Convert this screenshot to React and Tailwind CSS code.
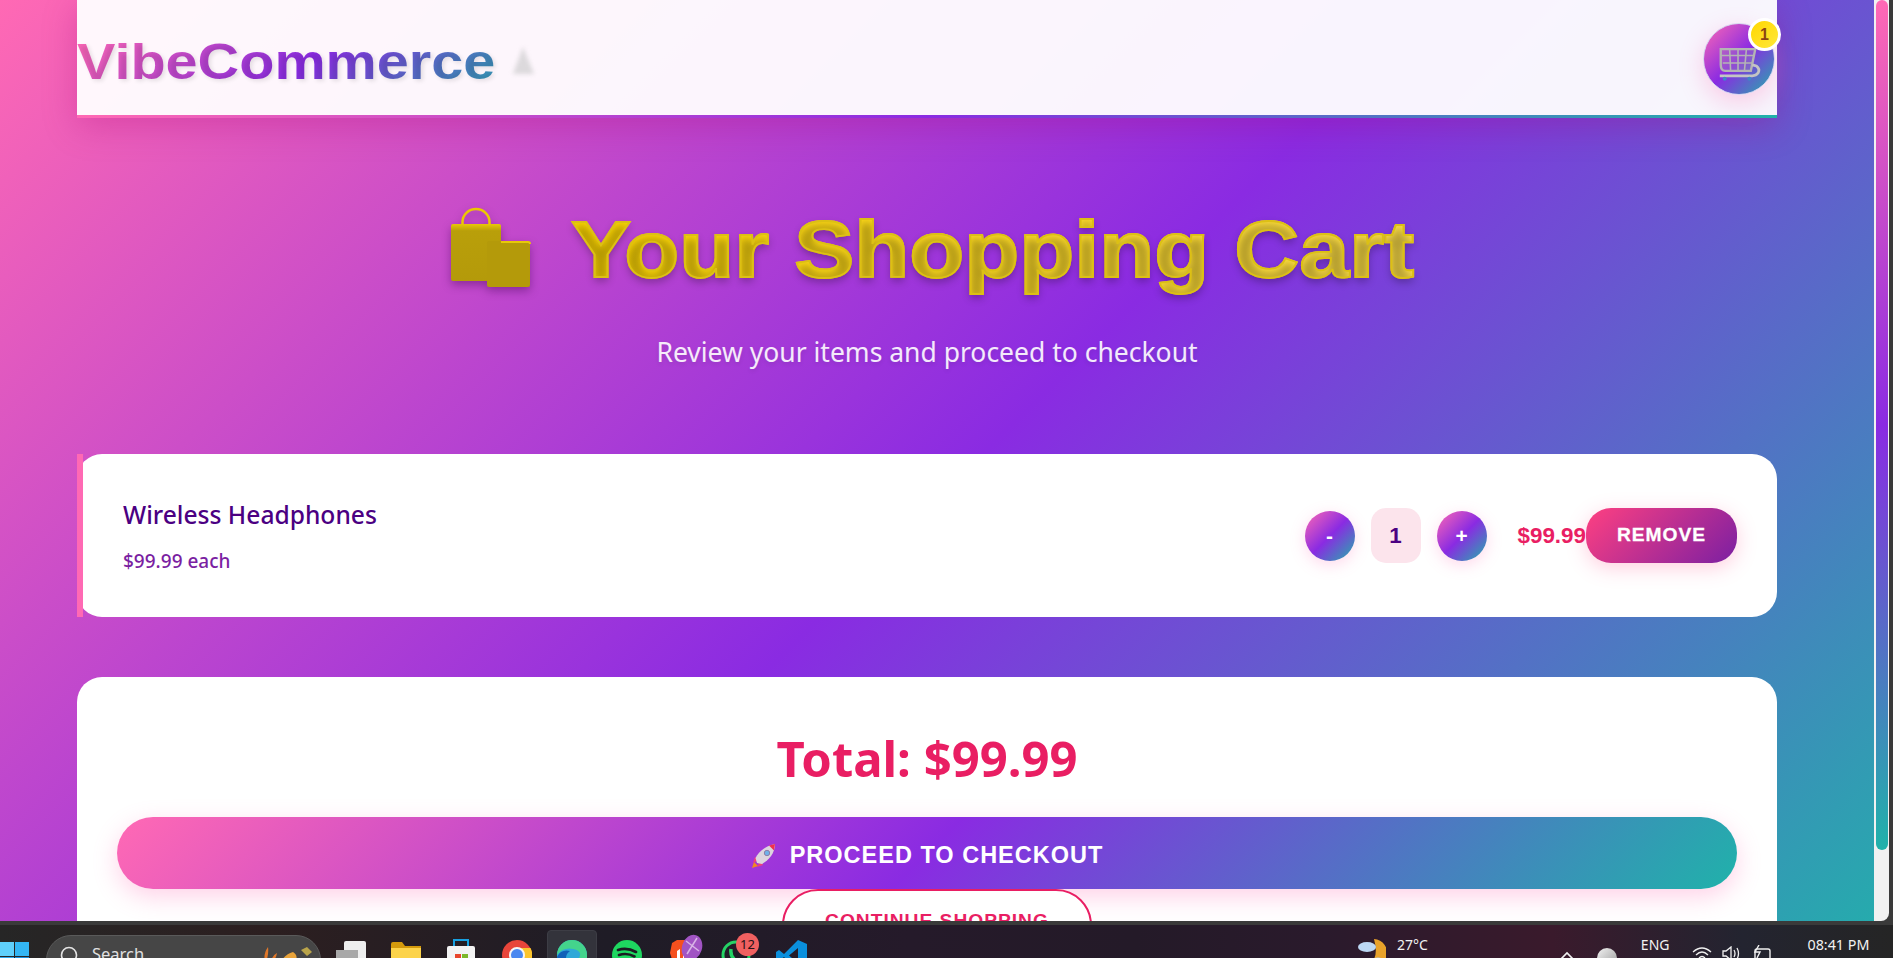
import React from 'react';

const sans = "font-['Noto_Sans',sans-serif]";
const arial = "font-['Liberation_Sans',Arial,sans-serif]";

const BagEmoji = () => (
  <svg width="82" height="82" viewBox="0 0 82 82" className="mb-[6px] shrink-0 drop-shadow-[0_4px_5px_rgba(60,0,80,0.4)]">
    <defs>
      <linearGradient id="bagEdge" x1="0" y1="0" x2="0" y2="1">
        <stop offset="0" stopColor="#e8c808" />
        <stop offset="0.12" stopColor="#b99f0a" />
        <stop offset="1" stopColor="#b49a0a" />
      </linearGradient>
    </defs>
    <path d="M12.5 21 v-5 a13.5 13 0 0 1 27 0 v5" fill="none" stroke="#ecc900" strokeWidth="2.5" />
    <rect x="1" y="18" width="50" height="57" rx="2" fill="url(#bagEdge)" />
    <rect x="37" y="35" width="43" height="46" rx="2" fill="#b49a0a" />
    <path d="M51 36 H78 Q80 36 80 38" fill="none" stroke="#e8c808" strokeWidth="2" />
  </svg>
);

const CartIcon = () => (
  <svg width="71" height="71" viewBox="0 0 71 71" fill="none" stroke="#b4b4b4" strokeWidth="1.6">
    <path d="M17 25 H52 L47.5 47 H21.5 Q17 47 17 41 Z" strokeWidth="2.4" fill="rgba(170,170,170,0.25)" />
    <path d="M18 31.5 H50.5 M19 39 H49 M26 25 L27 47 M34.5 25 V47 M43 25 L41 47" />
    <path d="M49 41 L53 42 Q57 45 55 49 Q53 52 49 52 H16" strokeWidth="2.8" stroke="#c4c4c4" />
    <circle cx="21" cy="55" r="2" fill="#3f86c6" stroke="none" />
    <circle cx="46" cy="55" r="2" fill="#3f86c6" stroke="none" />
  </svg>
);

const Rocket = () => (
  <svg width="26" height="26" viewBox="0 0 26 26" className="shrink-0">
    <path d="M3 19 L1 25 L7 23 Z" fill="#f28a1e" />
    <path d="M4 14 L2 20 L8 17 Z M12 22 L6 24 L9 18 Z" fill="#f0407a" />
    <path d="M6 20 L4.5 15 C8 8 15 3 24 1 C24 10 18 17 11 21 Z" fill="#ddd5de" />
    <path d="M18 2.5 L24 1 L23 7.5 Z" fill="#f0304f" />
    <circle cx="16" cy="10" r="2.7" fill="#6fb1e8" stroke="#8d7ea8" strokeWidth="1" />
  </svg>
);

const RoundBtn = ({ label }) => (
  <button className={`flex h-[50px] w-[50px] shrink-0 items-center justify-center rounded-full bg-[linear-gradient(135deg,#ff69b4_0%,#8a2be2_50%,#20b2aa_100%)] text-[20.8px] font-bold text-white shadow-[0_4px_15px_rgba(255,105,180,0.25)] ${arial}`}>
    {label}
  </button>
);

const Windows = () => (
  <svg width="29" height="29" viewBox="0 0 29 29">
    <rect x="0" y="0" width="14" height="14" fill="#5fd0fb" />
    <rect x="15" y="0" width="14" height="14" fill="#33b6f4" />
    <rect x="0" y="15" width="14" height="14" fill="#2ea7ee" />
    <rect x="15" y="15" width="14" height="14" fill="#1890e0" />
  </svg>
);

const TaskIcon = ({ className, children }) => <div className={`shrink-0 ${className}`}>{children}</div>;

const Taskbar = () => (
  <div className="flex h-[37px] shrink-0 items-start overflow-hidden border-t-4 border-[#3a3a3a] bg-[linear-gradient(90deg,#262626_0%,#2c1f20_14%,#1f1c26_32%,#251a2a_48%,#241a28_60%,#2a1a2c_70%,#3a1a2c_82%,#232430_92%,#252525_100%)]">
    <TaskIcon className="mt-[17px]"><Windows /></TaskIcon>
    <div className="relative ml-[17px] mt-[10px] flex h-[50px] w-[275px] shrink-0 rounded-[25px] border border-[#5a5a5a] bg-[#464646]">
      <svg width="19" height="21" viewBox="0 0 19 21" className="ml-[13px] mt-[10px]" fill="none" stroke="#e4e4e4" strokeWidth="1.6">
        <circle cx="9" cy="9" r="7.5" />
      </svg>
      <span className={`ml-[13px] mt-[6px] text-[16.5px] leading-[24px] text-[#e0e0e0] ${sans}`}>Search</span>
      <svg width="54" height="20" viewBox="0 0 54 20" className="absolute left-[214px] top-[8px]">
        <path d="M4 18 Q2 10 7 3 Q8 10 5 18 M10 20 Q10 12 16 9 Q15 15 10 20" fill="#e0782a" />
        <path d="M20 18 Q24 10 32 8 Q38 12 34 18 Q26 22 20 18" fill="#e8a33a" />
        <path d="M40 6 L46 3 L51 8 L46 12 Z" fill="#b9a44a" />
      </svg>
    </div>
    <TaskIcon className="ml-[15px] mt-[16px]">
      <svg width="30" height="30" viewBox="0 0 30 30"><rect x="8" y="0" width="22" height="30" rx="2" fill="#eeeeee" /><rect x="0" y="9" width="22" height="21" fill="#a8a8a8" /></svg>
    </TaskIcon>
    <TaskIcon className="ml-[25px] mt-[17px]">
      <svg width="30" height="30" viewBox="0 0 30 30"><path d="M0 2 Q0 0 2 0 H11 L14 4 H30 V30 H0 Z" fill="#d49a0c" /><rect x="0" y="6" width="30" height="24" fill="#fcd34a" /></svg>
    </TaskIcon>
    <TaskIcon className="ml-[25px] mt-[14px]">
      <svg width="30" height="32" viewBox="0 0 30 32"><path d="M8 8 V1 H22 V8" fill="none" stroke="#18a0e0" strokeWidth="2" /><rect x="1" y="7" width="28" height="25" rx="2" fill="#f3f3f3" /><rect x="9" y="15" width="6" height="6" fill="#e8452c" /><rect x="16" y="15" width="6" height="6" fill="#7cb82a" /><rect x="9" y="22" width="6" height="6" fill="#2aa0e8" /><rect x="16" y="22" width="6" height="6" fill="#f6b91c" /></svg>
    </TaskIcon>
    <TaskIcon className="ml-[26px] mt-[15px]">
      <svg width="30" height="30" viewBox="0 0 30 30">
        <circle cx="15" cy="15" r="15" fill="#e8453a" />
        <path d="M2 22 A15 15 0 0 0 15 30 L21 19 L8 19 Z" fill="#3aa757" />
        <path d="M15 8 H28.5 A15 15 0 0 1 15 30 L21 19 Z" fill="#fbc52c" />
        <circle cx="15" cy="15" r="7" fill="#4a88f0" stroke="#f5f5f5" strokeWidth="2" />
      </svg>
    </TaskIcon>
    <div className="ml-[15px] mt-[5px] flex h-[50px] w-[50px] shrink-0 justify-center rounded-[4px] border border-[#3d3d45] bg-[#33333b] pt-[9px]">
      <svg width="30" height="30" viewBox="0 0 30 30">
        <circle cx="15" cy="15" r="15" fill="#2ea8d8" />
        <path d="M30 15 A15 15 0 0 0 0 15 Q6 7 16 9 Q26 11 22 18 H30 Z" fill="#44d48c" />
        <path d="M0 17 Q4 9 13 11 Q7 15 10 23 Q13 28 19 29 Q3 32 0 17 Z" fill="#1060b8" />
      </svg>
    </div>
    <TaskIcon className="ml-[15px] mt-[15px]">
      <svg width="30" height="30" viewBox="0 0 30 30">
        <circle cx="15" cy="15" r="15" fill="#1ed760" />
        <path d="M6 10 Q15 7 24 12 M7 15 Q15 12.5 22.5 16.5 M8 20 Q15 18 21 21" fill="none" stroke="#1b1b22" strokeWidth="2.6" strokeLinecap="round" />
      </svg>
    </TaskIcon>
    <TaskIcon className="relative ml-[27px] mt-[15px] h-[30px] w-[34px]">
      <svg width="24" height="30" viewBox="0 0 24 30"><path d="M3 3 L8 0 H17 L22 3 L23 13 L19 26 L12 30 L5 26 L1 13 Z" fill="#f5501e" /><path d="M8 11 L11 9 V20 H8 Z M14 11 L17 13 L14 20 Z" fill="#ffffff" /></svg>
      <svg width="22" height="27" viewBox="0 0 22 27" className="absolute left-[12px] top-[-6px]">
        <ellipse cx="11" cy="13.5" rx="10" ry="13" transform="rotate(18 11 13.5)" fill="#a154c4" />
        <path d="M5 7 L18 17 M16 4 L6 20" stroke="#d8b4e6" strokeWidth="1.5" />
      </svg>
    </TaskIcon>
    <TaskIcon className="relative ml-[18px] mt-[15px] h-[30px] w-[30px]">
      <svg width="30" height="30" viewBox="0 0 30 30">
        <circle cx="15" cy="15" r="13" fill="none" stroke="#25d366" strokeWidth="3" />
        <path d="M10 9 Q9 16 14 20 Q18 23 22 21" fill="none" stroke="#25d366" strokeWidth="3.5" />
      </svg>
      <span className={`absolute left-[15px] top-[-7px] flex h-[23px] w-[23px] items-center justify-center rounded-full bg-[#f06060] text-[13px] text-[#241216] ${sans}`}>12</span>
    </TaskIcon>
    <TaskIcon className="ml-[25px] mt-[15px]">
      <svg width="31" height="31" viewBox="0 0 31 31">
        <path d="M22 0 L31 4 V27 L22 31 L8 17 L3 21 L0 19 V12 L3 10 L8 14 Z M22 8 L13 15.5 L22 23 Z" fill="#0a8fdc" fillRule="evenodd" />
      </svg>
    </TaskIcon>
    <TaskIcon className="ml-[551px] mt-[14px]">
      <svg width="28" height="30" viewBox="0 0 28 30">
        <path d="M16 0 A14 14 0 1 1 8 26 Q22 22 16 0 Z" fill="#e8a22a" />
        <ellipse cx="9" cy="8" rx="9" ry="5" fill="#bcd8f4" />
        <ellipse cx="20" cy="22" rx="6" ry="3.5" fill="#a8c8ec" />
      </svg>
    </TaskIcon>
    <span className={`ml-[11px] mt-[10px] shrink-0 text-[14px] leading-[20px] text-[#f2f2f2] ${sans}`}>27°C</span>
    <TaskIcon className="ml-[132px] mt-[26px]">
      <svg width="14" height="9" viewBox="0 0 14 9" fill="none" stroke="#f0f0f0" strokeWidth="1.6"><path d="M1 8 L7 2 L13 8" /></svg>
    </TaskIcon>
    <div className="ml-[23px] mt-[23px] h-[20px] w-[20px] shrink-0 rounded-full bg-[linear-gradient(135deg,#f2f2f2,#9a9a9a)]" />
    <span className={`ml-[24px] mt-[10px] shrink-0 text-[14px] leading-[20px] text-[#f2f2f2] ${sans}`}>ENG</span>
    <TaskIcon className="ml-[23px] mt-[21px]">
      <svg width="20" height="15" viewBox="0 0 20 15" fill="none" stroke="#f0f0f0" strokeWidth="1.3"><path d="M1 6 Q10 -2 19 6 M4 9 Q10 3 16 9 M7 12 Q10 9 13 12" /></svg>
    </TaskIcon>
    <TaskIcon className="ml-[10px] mt-[21px]">
      <svg width="18" height="15" viewBox="0 0 18 15" fill="none" stroke="#f0f0f0" strokeWidth="1.3"><path d="M1 5 H4 L9 1 V14 L4 10 H1 Z M12 4 Q14 7.5 12 11 M15 2 Q18 7.5 15 13" /></svg>
    </TaskIcon>
    <TaskIcon className="ml-[12px] mt-[20px]">
      <svg width="20" height="16" viewBox="0 0 20 16" fill="none" stroke="#f0f0f0" strokeWidth="1.4"><rect x="3" y="4" width="15" height="12" rx="2" /><path d="M7 0 L3 7 H8 L5 13" /></svg>
    </TaskIcon>
    <span className={`ml-[35px] mt-[10px] shrink-0 text-[14.3px] leading-[20px] text-[#f2f2f2] ${sans}`}>08:41 PM</span>
  </div>
);

const App = () => {
  return (
    <div className="flex h-[958px] w-[1893px] flex-col overflow-hidden bg-[#3a3a3a]">
      <div className="flex h-[921px] shrink-0 overflow-hidden">
        <div className="h-[1000px] w-[1874px] shrink-0 bg-[linear-gradient(135deg,#ff69b4_0%,#8a2be2_50%,#20b2aa_100%)] px-[77px]">
          <div className="w-[1700px]">
            <header className="relative flex h-[118px] items-center justify-between bg-white/95 shadow-[0_8px_32px_rgba(170,0,110,0.28)]">
              <div className="relative mt-[6px]">
                {/* gradient box runs past the text, up to the faint emoji */}
                <span className={`block origin-left scale-x-[1.152] bg-[linear-gradient(135deg,#ff69b4_0%,#8a2be2_50%,#20b2aa_100%)] bg-clip-text pr-[36px] text-[50px] font-bold leading-[56px] text-transparent [text-shadow:2px_2px_4px_rgba(0,0,0,0.1)] ${arial}`}>
                  VibeCommerce
                </span>
                <svg width="30" height="34" viewBox="0 0 30 34" className="absolute left-[431px] top-[10px] blur-[2px]">
                  <path d="M15 3 L26 30 H5 Z" fill="#dcd9dc" />
                </svg>
              </div>
              <button className="relative mr-[2px] flex h-[72px] w-[72px] items-center justify-center rounded-full border border-[#d8d4f0] bg-[linear-gradient(135deg,#ff69b4_0%,#8a2be2_50%,#20b2aa_100%)] shadow-[0_8px_25px_rgba(255,105,180,0.3)]">
                <CartIcon />
                <span className={`absolute right-[-7px] top-[-6px] flex h-[33px] w-[33px] items-center justify-center rounded-full border-[3px] border-white bg-[linear-gradient(135deg,#ffd700,#ffe83a)] text-[16px] font-bold text-[#8b4513] ${arial}`}>
                  1
                </span>
              </button>
              <div className="absolute bottom-0 left-0 h-[3px] w-full bg-[linear-gradient(90deg,#ff69b4,#8a2be2,#20b2aa)]" />
            </header>

            <section className="flex flex-col items-center pt-[86px]">
              <h1 className="flex items-center gap-[39px] pl-[11px]">
                <BagEmoji />
                <div className="w-[844px]">
                  <span className={`inline-block origin-left scale-x-[1.125] bg-[linear-gradient(90deg,#ffd700,#ffe04a)] bg-clip-text text-[80px] font-bold leading-[92px] text-transparent [-webkit-text-stroke:1.8px_#dcc014] [text-shadow:0_4px_8px_rgba(0,0,0,0.3)] ${arial}`}>
                    Your Shopping Cart
                  </span>
                </div>
              </h1>
              <p className={`mt-[37px] text-[26.5px] leading-[38px] text-white/90 [text-shadow:0_2px_4px_rgba(0,0,0,0.1)] ${sans}`}>
                Review your items and proceed to checkout
              </p>
            </section>

            <div className="relative mt-[83px] flex h-[163px] items-center justify-between rounded-[25px] bg-white pl-[46px] pr-[40px]">
              <div className="absolute bottom-0 left-0 top-0 w-[6px] bg-[#ff69b4]" />
              <div className={sans}>
                <h3 className="mt-[2px] text-[24.6px] font-medium leading-[32px] text-[#4b0082]">Wireless Headphones</h3>
                <p className="mt-[18px] text-[19px] font-medium leading-[25px] text-[#7b1fa2]">$99.99 each</p>
              </div>
              <div className="flex items-center">
                <RoundBtn label="-" />
                <div className={`ml-[16px] flex h-[55px] w-[50px] items-center justify-center rounded-[15px] bg-[#fce4ec] text-[22.4px] font-bold text-[#4b0082] ${arial}`}>1</div>
                <div className="ml-[16px]"><RoundBtn label="+" /></div>
                <span className={`ml-[31px] text-[22.4px] font-bold text-[#e91e63] ${arial}`}>$99.99</span>
                <button className={`h-[55px] w-[151px] rounded-[25px] bg-[linear-gradient(135deg,#ff4081,#7b1fa2)] text-[19.2px] font-bold tracking-[1px] text-white shadow-[0_5px_20px_rgba(255,64,129,0.25)] [-webkit-text-stroke:0.3px_#ffffff] ${arial}`}>
                  REMOVE
                </button>
              </div>
            </div>

            <div className="mt-[60px] flex flex-col items-center rounded-[25px] bg-white px-[40px] pt-[47px]">
              <div className={`text-[49px] font-bold leading-[68px] text-[#e91e63] ${sans}`}>Total: $99.99</div>
              <button className={`mt-[25px] flex h-[72px] w-full items-center justify-center gap-[13px] rounded-[36px] bg-[linear-gradient(135deg,#ff69b4_0%,#8a2be2_50%,#20b2aa_100%)] pt-[5px] text-[23.5px] font-bold tracking-[1px] text-white shadow-[0_8px_25px_rgba(255,105,180,0.3)] ${arial}`}>
                <Rocket />
                PROCEED TO CHECKOUT
              </button>
              <button className={`ml-[20px] flex h-[72px] w-[310px] justify-center rounded-[36px] border-2 border-[#e91e63] bg-white pt-[19px] text-[19.2px] font-bold leading-[22px] tracking-[1px] text-[#e91e63] ${arial}`}>
                CONTINUE SHOPPING
              </button>
            </div>
          </div>
        </div>
        <div className="relative h-full w-[15px] shrink-0 rounded-br-[8px] bg-[#f1f1f1]">
          <div className="absolute left-[2px] top-0 h-[850px] w-[12px] rounded-b-[8px] rounded-t-[8px] bg-[linear-gradient(180deg,#ff69b4,#8a2be2_50%,#20b2aa)]" />
        </div>
      </div>
      <Taskbar />
    </div>
  );
};

export default App;
